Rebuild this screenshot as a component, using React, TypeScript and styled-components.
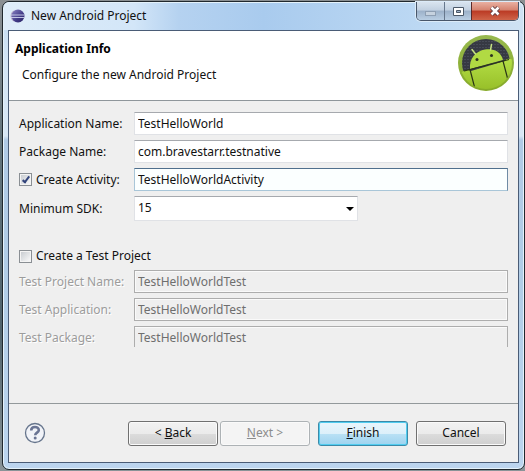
import React, { useState } from 'react';
import styled, { createGlobalStyle, css } from 'styled-components';

const GlobalStyle = createGlobalStyle`
  *, *::before, *::after { box-sizing: border-box; }
  body {
    margin: 0;
    color: #111;
    font: 12px/18px "Noto Sans", "Open Sans", "Noto Sans CJK SC", sans-serif;
  }
  input, select, button { font: inherit; color: inherit; margin: 0; }
`;

const Desktop = styled.div`
  min-height: 100vh;
  display: flex;
  padding: 1px 0 1px 2px;
  background: linear-gradient(180deg, #8b9093 0, #64757d 30%, #50636c 70%, #8a9498 100%);
`;

const DialogWindow = styled.main`
  flex: 1;
  min-width: 0;
  display: flex;
  flex-direction: column;
  padding: 0 5px 6px;
  border: 1px solid #20282e;
  border-radius: 7px;
  box-shadow: inset 0 0 0 1px #e4f2fb;
  background: linear-gradient(180deg, #c2daf1 0, #d3e5f5 60px, #d8e7f5 134px, #b0cae6 138px, #b1cde7 60%, #bcd5ef 100%);
`;

const TitleBar = styled.header`
  height: 28px;
  display: flex;
  align-items: flex-start;
  margin: 0 -4px;
  padding: 0 4px;
  border-radius: 6px 6px 0 0;
  background: linear-gradient(90deg, #dfedf9 0, #d3e6f8 130px, #b5d2f0 175px, #a9cbee 50%, #bcd8f3 80%, #cfe2f3 100%);
  box-shadow: inset 0 1px 0 #e4f2fb;
`;

const Title = styled.h1`
  flex: 1;
  display: flex;
  align-items: center;
  gap: 6px;
  height: 28px;
  margin: 0;
  padding-left: 2px;
  font-size: 12px;
  font-weight: 400;
  white-space: nowrap;

  svg { flex: none; }
`;

const Controls = styled.div`
  display: flex;
  height: 19px;
  border: 1px solid #48566a;
  border-top: 0;
  border-radius: 0 0 5px 5px;
  overflow: hidden;
  box-shadow: 0 0 0 1px #dcebf8;
`;

const ControlButton = styled.button<{ $close?: boolean }>`
  display: grid;
  place-items: center;
  width: ${({ $close }) => ($close ? 47 : 27)}px;
  padding: 0;
  border: 0;
  border-left: 1px solid #66778c;
  background: linear-gradient(180deg, #d9e4ef 0, #c2d1e1 45%, #9cb1c9 50%, #b9cee3 100%);

  &:first-child { border-left: 0; }

  ${({ $close }) => $close && css`
    border-left-color: #5b2a2a;
    background: linear-gradient(180deg, #e9b0a2 0, #d5836f 45%, #bb3a24 50%, #cf654a 100%);
  `}
`;

const Client = styled.div`
  flex: 1;
  display: flex;
  flex-direction: column;
  border: 1px solid #4a5c76;
  background: #efefef;
`;

const Banner = styled.section`
  display: flex;
  justify-content: space-between;
  height: 70px;
  padding: 4px 4px 0 6px;
  border-bottom: 1px solid #8f969b;
  background: #fff;

  svg { flex: none; }
`;

const BannerText = styled.div`
  padding-top: 5px;
`;

const Heading = styled.h2`
  margin: 0 0 8px;
  font-size: 12px;
  line-height: 18px;
  font-weight: 700;
  color: #000;
`;

const Description = styled.p`
  margin: 0;
  padding-left: 7px;
`;

const Form = styled.form`
  flex: 1;
  display: flex;
  flex-direction: column;
`;

const Fields = styled.div`
  flex: 1;
  display: flex;
  flex-direction: column;
  gap: 5px;
  padding: 11px 10px;
`;

const Row = styled.div`
  display: grid;
  grid-template-columns: 115px 1fr;
  align-items: center;
  min-height: 23px;
`;

const Label = styled.label<{ $disabled?: boolean }>`
  display: flex;
  align-items: center;
  gap: 4px;
  white-space: nowrap;
  ${({ $disabled }) => $disabled && css`
    color: #9c9c9c;
    text-shadow: 1px 1px 0 #fff;
  `}
`;

const SectionToggle = styled(Label)`
  height: 18px;
  margin-top: 21px;
`;

const TextInput = styled.input<{ $cut?: boolean }>`
  width: 100%;
  min-width: 0;
  height: 23px;
  padding: 0 3px;
  border: 1px solid #e0e2e6;
  border-top-color: #a6a9ae;
  border-radius: 0;
  background: #fff;
  outline: 0;

  &:focus {
    border-color: #a9c6d8;
    border-top-color: #4f6f8d;
    border-right-color: #6f8ba5;
    background: #fbffff;
  }

  &:disabled {
    border-color: #adadad;
    background: #efefef;
    color: #6e6e6e;
    box-shadow: inset 0 0 0 1px #fafafa;
  }

  ${({ $cut }) => $cut && css`
    height: 21px;
    padding-top: 1px;
    align-self: start;

    &, &:disabled {
      border-bottom: 0;
      box-shadow: inset 0 1px 0 #fafafa;
    }
  `}
`;

const CheckBox = styled.input`
  appearance: none;
  flex: none;
  display: grid;
  place-items: center;
  width: 13px;
  height: 13px;
  border: 1px solid #8a8f94;
  background: linear-gradient(135deg, #c4c8cd 0, #f4f5f6 85%);
  box-shadow: inset 0 0 0 1px #f4f4f4;

  &:checked::after {
    content: "";
    width: 4px;
    height: 8px;
    margin-bottom: 2px;
    border: solid #33457c;
    border-width: 0 2px 2px 0;
    transform: rotate(38deg);
  }
`;

const Combo = styled.div`
  display: grid;
  align-items: center;
  width: 60%;

  > * { grid-area: 1 / 1; }
  svg {
    justify-self: end;
    margin-right: 4px;
    pointer-events: none;
  }
`;

const Select = styled.select`
  appearance: none;
  width: 100%;
  height: 25px;
  padding: 0 18px 2px 3px;
  border: 1px solid #e0e2e6;
  border-top-color: #a6a9ae;
  border-radius: 0;
  background: #fff;
`;

const Footer = styled.footer`
  display: flex;
  align-items: center;
  justify-content: space-between;
  height: 59px;
  padding: 0 12px 0 15px;
  border-top: 1px solid #93999b;
`;

const HelpButton = styled.button`
  display: grid;
  padding: 0;
  border: 0;
  background: none;
`;

const Actions = styled.div`
  display: flex;
  gap: 8px;
`;

const Pair = styled.div`
  display: flex;
  gap: 2px;
`;

const PushButton = styled.button<{ $primary?: boolean }>`
  width: 90px;
  height: 25px;
  padding: 0;
  border: 1px solid #707070;
  border-radius: 3px;
  background: linear-gradient(180deg, #f2f2f2 0, #ebebeb 50%, #dcdcdc 51%, #cfcfcf 100%);
  box-shadow: inset 0 0 0 1px #fafafa;

  ${({ $primary }) => $primary && css`
    border-color: #3c8aa8;
    background: linear-gradient(180deg, #eaf6fc 0, #dcf0fa 50%, #b9e1f5 51%, #9ed3ef 100%);
    box-shadow: inset 0 0 0 1px #52cdf0;
  `}

  &:disabled {
    border-color: #adb2b5;
    background: #f4f4f4;
    color: #8c8c8c;
  }
`;

const EclipseIcon = () => (
  <svg width="15" height="14" viewBox="0 0 15 14" aria-hidden="true">
    <defs>
      <linearGradient id="orb" x1="0" y1="0" x2="1" y2="1">
        <stop offset="0" stopColor="#8b83c4" />
        <stop offset="0.6" stopColor="#413a86" />
        <stop offset="1" stopColor="#2b2463" />
      </linearGradient>
    </defs>
    <path d="M5 1A6.3 6.3 0 0 0 5 13A8 8 0 0 1 5 1Z" fill="#b9a9c9" />
    <circle cx="8" cy="7" r="6.500" fill="url(#orb)" />
    <path d="M1 6H14.400M1 8.500H14.400" stroke="#cfd2ee" strokeWidth="0.900" />
  </svg>
);

const AndroidIcon = () => (
  <svg width="56" height="56" viewBox="0 0 56 56" aria-hidden="true">
    <defs>
      <linearGradient id="rim" x1="0" y1="0" x2="0" y2="1">
        <stop offset="0" stopColor="#98b94f" />
        <stop offset="1" stopColor="#86aa28" />
      </linearGradient>
      <linearGradient id="robot" x1="0" y1="0" x2="0" y2="1">
        <stop offset="0" stopColor="#b4de45" />
        <stop offset="1" stopColor="#96be28" />
      </linearGradient>
      <pattern id="mesh" width="3" height="3" patternUnits="userSpaceOnUse">
        <rect width="3" height="3" fill="#363943" />
        <path d="M0 0H2V1H0Z" fill="#464a56" />
      </pattern>
      <clipPath id="disc"><circle cx="28" cy="28" r="26" /></clipPath>
    </defs>
    <circle cx="28" cy="28" r="28" fill="url(#rim)" />
    <circle cx="28" cy="28" r="24" fill="url(#mesh)" />
    <g clipPath="url(#disc)">
      <path d="M0 38L5 36.500Q9 34 13 36L47 26Q48 22 56 25V56H0Z" fill="url(#robot)" />
      <path d="M12 34C11 23 18 16 27 14.500C36 13 43 17 45 25Z" fill="#b1da43" />
      <path d="M17.500 19L14 14.500M32.500 15L33.500 9.500" stroke="#c6e282" strokeWidth="1.500" strokeLinecap="round" />
      <circle cx="19" cy="24.500" r="1.500" fill="#2c3320" />
      <circle cx="33.500" cy="20.500" r="1.500" fill="#2c3320" />
      <path d="M6 36L12 34.500L51 24.500M12 34.500L17 54M45 26L50 45" fill="none" stroke="#2a3516" strokeWidth="1.200" />
    </g>
  </svg>
);

const HelpIcon = () => (
  <svg width="22" height="22" viewBox="0 0 22 22" aria-hidden="true">
    <circle cx="11" cy="11" r="9.500" fill="#f1f3f8" stroke="#66758c" strokeWidth="1.300" />
    <path d="M7.200 8.500C7.200 3.800 14.800 4 14.800 8.200C14.800 10.600 11.300 10.700 11.200 13.200" fill="none" stroke="#6a7594" strokeWidth="2.600" />
    <circle cx="11.200" cy="16" r="1.500" fill="#6a7594" />
  </svg>
);

const MinimizeIcon = () => (
  <svg width="13" height="11" viewBox="0 0 13 11" aria-hidden="true">
    <rect x="1.500" y="5.500" width="10" height="4" fill="#c6d2df" stroke="#8e9fb3" />
  </svg>
);

const MaximizeIcon = () => (
  <svg width="13" height="11" viewBox="0 0 13 11" aria-hidden="true">
    <path fillRule="evenodd" d="M1.500 1.500H11.500V9.500H1.500ZM4.500 4.500V6.500H8.500V4.500Z" fill="#fff" stroke="#4b5868" />
  </svg>
);

const CloseIcon = () => (
  <svg width="14" height="12" viewBox="0 0 14 12" aria-hidden="true">
    <path d="M3.500 2.500L10.500 9.500M10.500 2.500L3.500 9.500" stroke="#5d3b40" strokeWidth="4.400" />
    <path d="M3.500 2.500L10.500 9.500M10.500 2.500L3.500 9.500" stroke="#fff" strokeWidth="2.600" />
  </svg>
);

export default function App() {
  const [createActivity, setCreateActivity] = useState(true);
  const [createTest, setCreateTest] = useState(false);

  return (
    <>
      <GlobalStyle />
      <Desktop>
        <DialogWindow>
          <TitleBar>
            <Title><EclipseIcon />New Android Project</Title>
            <Controls>
              <ControlButton type="button" aria-label="Minimize" disabled><MinimizeIcon /></ControlButton>
              <ControlButton type="button" aria-label="Maximize"><MaximizeIcon /></ControlButton>
              <ControlButton type="button" aria-label="Close" $close><CloseIcon /></ControlButton>
            </Controls>
          </TitleBar>
          <Client>
            <Banner>
              <BannerText>
                <Heading>Application Info</Heading>
                <Description>Configure the new Android Project</Description>
              </BannerText>
              <AndroidIcon />
            </Banner>
            <Form onSubmit={(e) => e.preventDefault()}>
              <Fields>
                <Row>
                  <Label htmlFor="app">Application Name:</Label>
                  <TextInput id="app" defaultValue="TestHelloWorld" />
                </Row>
                <Row>
                  <Label htmlFor="package">Package Name:</Label>
                  <TextInput id="package" defaultValue="com.bravestarr.testnative" />
                </Row>
                <Row>
                  <Label>
                    <CheckBox type="checkbox" checked={createActivity} onChange={(e) => setCreateActivity(e.target.checked)} />
                    Create Activity:
                  </Label>
                  <TextInput aria-label="Activity name" defaultValue="TestHelloWorldActivity" disabled={!createActivity} autoFocus />
                </Row>
                <Row>
                  <Label htmlFor="sdk">Minimum SDK:</Label>
                  <Combo>
                    <Select id="sdk" defaultValue="15"><option>15</option></Select>
                    <svg width="8" height="4" viewBox="0 0 8 4" aria-hidden="true"><path d="M0 0H8L4 4Z" /></svg>
                  </Combo>
                </Row>
                <SectionToggle>
                  <CheckBox type="checkbox" checked={createTest} onChange={(e) => setCreateTest(e.target.checked)} />
                  Create a Test Project
                </SectionToggle>
                <Row>
                  <Label htmlFor="test-name" $disabled={!createTest}>Test Project Name:</Label>
                  <TextInput id="test-name" defaultValue="TestHelloWorldTest" disabled={!createTest} />
                </Row>
                <Row>
                  <Label htmlFor="test-app" $disabled={!createTest}>Test Application:</Label>
                  <TextInput id="test-app" defaultValue="TestHelloWorldTest" disabled={!createTest} />
                </Row>
                <Row>
                  <Label htmlFor="test-package" $disabled={!createTest}>Test Package:</Label>
                  <TextInput id="test-package" defaultValue="TestHelloWorldTest" disabled={!createTest} $cut />
                </Row>
              </Fields>
              <Footer>
                <HelpButton type="button" aria-label="Help"><HelpIcon /></HelpButton>
                <Actions>
                  <Pair>
                    <PushButton type="button">&lt; <u>B</u>ack</PushButton>
                    <PushButton type="button" disabled><u>N</u>ext &gt;</PushButton>
                  </Pair>
                  <PushButton type="submit" $primary><u>F</u>inish</PushButton>
                  <PushButton type="button">Cancel</PushButton>
                </Actions>
              </Footer>
            </Form>
          </Client>
        </DialogWindow>
      </Desktop>
    </>
  );
}
